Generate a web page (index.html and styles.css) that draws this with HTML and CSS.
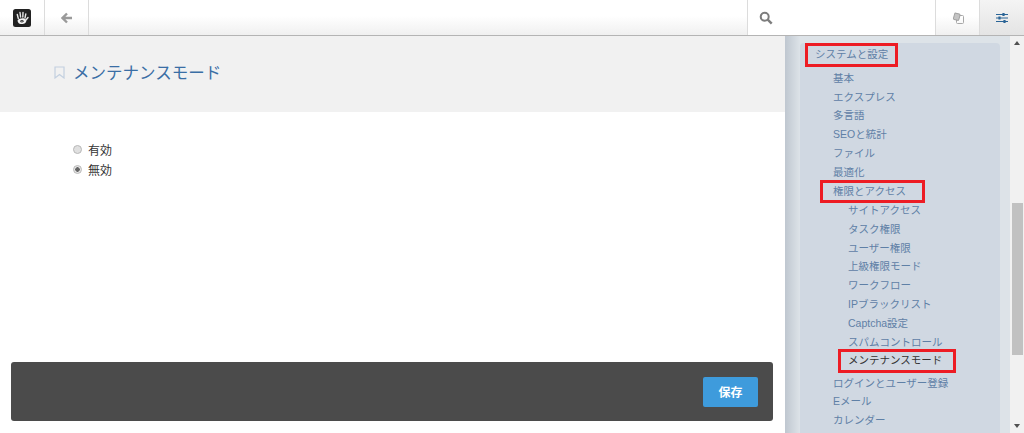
FILE: index.html
```html
<!doctype html>
<html lang="ja">
  <head>
    <meta charset="UTF-8" />
    <title>メンテナンスモード</title>
    <link rel="stylesheet" href="styles.css">
  </head>
  <body>
    <header class="toolbar">
      <div class="tool tool-logo">
        <svg width="18" height="18" viewBox="0 0 18 18">
          <rect width="18" height="18" rx="2.500" fill="#222" />
          <path d="M4.300 5.500l1 4M7 3.500l.6 4.500M10 3.500l-.2 4.500M12.800 5l-.8 4" stroke="#e8e8e8" stroke-width="1.400" stroke-linecap="round" fill="none" />
          <path d="M15 8.500l-2 2.500" stroke="#e8e8e8" stroke-width="1.400" stroke-linecap="round" />
          <path d="M4.500 11.500c1.500-2.500 7.500-3 8.500-.5s-1.500 4-4.500 4-3.500-1.500-4-3.500z" fill="#f4f4f4" />
          <path d="M7 12.500c1-1.200 3-1.200 3.500-.3-.5.800-2 .8-2.800.6" stroke="#222" stroke-width="1" fill="none" />
        </svg>
      </div>
      <div class="tool tool-back">
        <svg width="12" height="12" viewBox="0 0 12 12">
          <path d="M6 1.500L1.500 6 6 10.500M2 6h9" stroke="#9a9a9a" stroke-width="2.400" fill="none" />
        </svg>
      </div>
      <div class="toolbar-gap"></div>
      <div class="search">
        <svg width="14" height="14" viewBox="0 0 14 14">
          <circle cx="5.700" cy="5.700" r="4" stroke="#7d7d7d" stroke-width="2" fill="none" />
          <path d="M8.700 8.700l4 4" stroke="#7d7d7d" stroke-width="2.400" />
        </svg>
      </div>
      <div class="tool tool-pages">
        <svg width="12" height="12" viewBox="0 0 12 12">
          <rect x="4.500" y="3.500" width="7" height="8" rx="1" stroke="#a8a8a8" fill="none" />
          <rect x="2" y="1.500" width="5.500" height="6.500" rx="1" transform="rotate(15 4.700 4.700)" stroke="#a0a0a0" fill="#c4c4c4" />
        </svg>
      </div>
      <div class="tool tool-settings">
        <svg width="14" height="12" viewBox="0 0 14 12">
          <path d="M1 2.500h12M1 6h12M1 9.500h12" stroke="#2a6496" stroke-width="1.100" />
          <path d="M8.500 1v3M4.500 4.500v3M9.500 8v3" stroke="#2a6496" stroke-width="2.200" />
        </svg>
      </div>
    </header>

    <div class="layout">
      <main class="content">
        <div class="page-title">
          <svg class="bookmark" width="11" height="13" viewBox="0 0 11 13">
            <path d="M1 1h9v11L5.500 8.500 1 12z" stroke="#c3d0e0" stroke-width="1.200" fill="none" />
          </svg>
          <h1>メンテナンスモード</h1>
        </div>
        <form class="options">
          <label class="option"><span class="radio"></span>有効</label>
          <label class="option"><span class="radio radio-on"></span>無効</label>
        </form>
        <div class="actions">
          <button class="save" type="button">保存</button>
        </div>
      </main>

      <aside class="sidebar">
        <div class="panel">
          <ul class="nav">
            <li class="nav-top"><span class="mark mark-top">システムと設定</span></li>
            <li>基本</li>
            <li>エクスプレス</li>
            <li>多言語</li>
            <li>SEOと統計</li>
            <li>ファイル</li>
            <li>最適化</li>
            <li class="nav-group"><span class="mark mark-access">権限とアクセス</span></li>
            <li class="sub">サイトアクセス</li>
            <li class="sub">タスク権限</li>
            <li class="sub">ユーザー権限</li>
            <li class="sub">上級権限モード</li>
            <li class="sub">ワークフロー</li>
            <li class="sub">IPブラックリスト</li>
            <li class="sub">Captcha設定</li>
            <li class="sub">スパムコントロール</li>
            <li class="sub current"><span class="mark mark-current">メンテナンスモード</span></li>
            <li>ログインとユーザー登録</li>
            <li>Eメール</li>
            <li>カレンダー</li>
          </ul>
        </div>
      </aside>

      <div class="scrollbar">
        <span class="arrow arrow-up"></span>
        <div class="track"><div class="thumb"></div></div>
        <span class="arrow arrow-down"></span>
      </div>
    </div>
  </body>
</html>
```

FILE: styles.css
```css
* {
  margin: 0;
  padding: 0;
  box-sizing: border-box;
}

html,
body {
  height: 433px;
  overflow: hidden;
}

body {
  font-family: "Liberation Sans", "Noto Sans CJK JP", sans-serif;
  background: #fff;
  color: #333;
  display: flex;
  flex-direction: column;
}

.toolbar {
  display: flex;
  height: 36px;
  flex: none;
  background: linear-gradient(to bottom, #fff 0%, #fff 45%, #f0f0f0 100%);
  border-bottom: 1px solid #b4b4b4;
}

.tool {
  display: flex;
  align-items: center;
  justify-content: center;
}

.tool-logo {
  width: 45px;
  padding-right: 1px;
  border-right: 1px solid #dcdcdc;
}

.tool-back {
  width: 44px;
  border-right: 1px solid #dcdcdc;
}

.toolbar-gap {
  flex: 1;
}

.search {
  width: 188px;
  padding: 11px 0 0 11px;
  background: #fff;
  border-left: 1px solid #dcdcdc;
}

.tool-pages {
  width: 44px;
  border-left: 1px solid #dcdcdc;
}

.tool-settings {
  width: 45px;
  border-left: 1px solid #dcdcdc;
  background: linear-gradient(to bottom, #f4f4f4, #e4e4e4);
}

.layout {
  display: flex;
  flex: 1;
  min-height: 0;
}

.content {
  width: 785px;
  flex: none;
  display: flex;
  flex-direction: column;
}

.page-title {
  display: flex;
  align-items: center;
  height: 76px;
  padding: 0 0 4px 54px;
  background: #f1f1f1;
}

.bookmark {
  margin-right: 8px;
}

.page-title h1 {
  font-size: 16.500px;
  font-weight: 400;
  color: #3a6ea5;
}

.options {
  padding: 27px 0 0 73px;
  flex: 1;
}

.option {
  display: flex;
  align-items: center;
  height: 20.500px;
  font-size: 12px;
  color: #333;
}

.radio {
  width: 9px;
  height: 9px;
  margin-right: 6px;
  border: 1px solid #b8b8b8;
  border-radius: 50%;
  background: #e0e0e0;
}

.radio-on {
  background: radial-gradient(circle, #666 0, #666 2px, #e6e6e6 2.500px);
}

.actions {
  display: flex;
  align-items: center;
  justify-content: flex-end;
  height: 59px;
  margin: 0 12px 12px 11px;
  padding-right: 15px;
  background: #4b4b4b;
  border-radius: 3px;
}

.save {
  width: 55px;
  height: 30px;
  border: 0;
  border-radius: 2px;
  background: #3e9bdc;
  color: #fff;
  font: 700 12px "Liberation Sans", "Noto Sans CJK JP", sans-serif;
}

.sidebar {
  width: 225px;
  flex: none;
  padding: 7px 10px 0 15px;
  background: linear-gradient(to right, #bfc7d0 0, #dde3e8 15px);
  overflow: hidden;
}

.panel {
  height: 400px;
  background: #d0d8e2;
  border-radius: 4px;
}

.nav {
  list-style: none;
  padding: 2px 0 0 33px;
  font-size: 10.500px;
  line-height: 18.800px;
  color: #5f80a6;
}

.nav li {
  white-space: nowrap;
}

.nav-top {
  margin: 0 0 5px -18px;
}

.nav .nav-group {
  margin-bottom: 0.700px;
}

.nav .sub {
  padding-left: 15px;
}

.nav .current {
  color: #333;
  margin-bottom: 3.300px;
}

/* red annotation frames drawn over the menu text */
.mark {
  position: relative;
  display: inline-block;
}

.mark::after {
  content: "";
  position: absolute;
  top: -2px;
  bottom: -3px;
  border: 3px solid #ed1c24;
}

.mark-top::after {
  left: -10px;
  right: -10px;
}

.mark-access::after {
  left: -13px;
  right: -19px;
}

.mark-current::after {
  left: -10px;
  right: -14px;
}

.scrollbar {
  width: 14px;
  flex: none;
  display: flex;
  flex-direction: column;
  align-items: center;
  background: #f1f1f1;
}

.arrow {
  flex: none;
  width: 0;
  height: 0;
  border-left: 3.500px solid transparent;
  border-right: 3.500px solid transparent;
}

.arrow-up {
  margin-top: 5px;
  border-bottom: 4px solid #505050;
}

.arrow-down {
  margin-bottom: 5px;
  border-top: 4px solid #505050;
}

.track {
  flex: 1;
  width: 100%;
  padding: 158px 1px 0 2px;
}

.thumb {
  height: 152px;
  background: #c1c1c1;
}
```
